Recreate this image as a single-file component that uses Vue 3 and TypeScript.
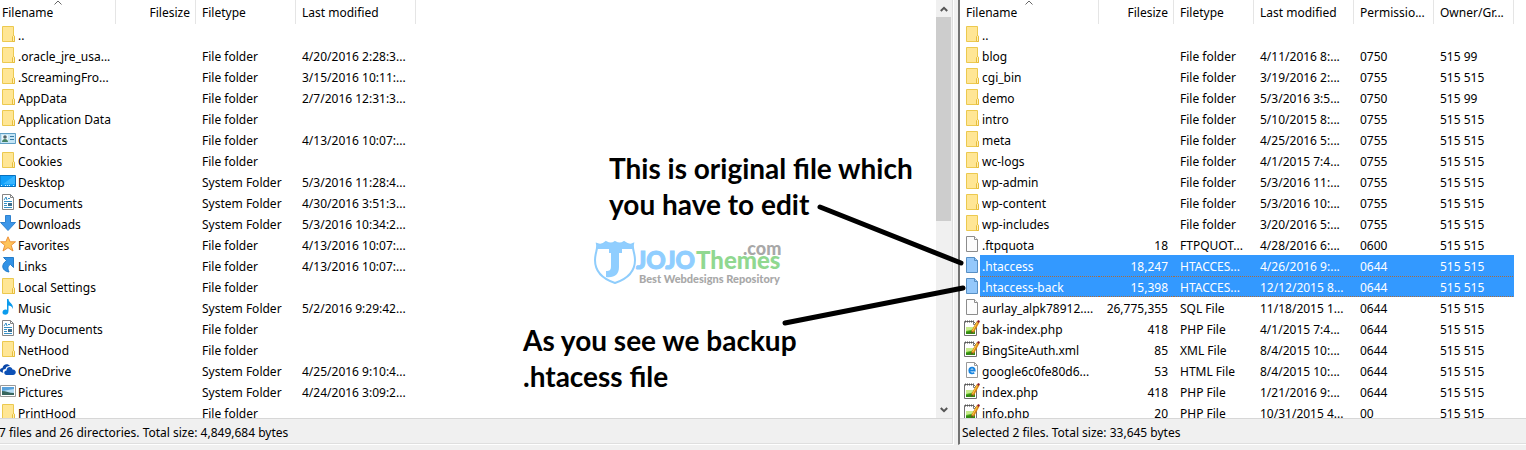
<script setup lang="ts">
interface Column { label: string; width: number; align?: 'right' }
interface Row { icon: string; cells: string[]; selected?: boolean; focused?: boolean }
interface Pane { id: string; title: string; columns: Column[]; rows: Row[]; status: string; scroll: boolean }

const local = (icon: string, name: string, type = '', modified = ''): Row => ({ icon, cells: [name, '', type, modified] })
const remote = (icon: string, ...cells: string[]): Row => ({ icon, cells })

const panes: Pane[] = [
  {
    id: 'local',
    title: 'Local files',
    scroll: true,
    status: '7 files and 26 directories. Total size: 4,849,684 bytes',
    columns: [
      { label: 'Filename', width: 116 },
      { label: 'Filesize', width: 80, align: 'right' },
      { label: 'Filetype', width: 100 },
      { label: 'Last modified', width: 120 },
    ],
    rows: [
      local('folder', '..'),
      local('folder', '.oracle_jre_usa...', 'File folder', '4/20/2016 2:28:3...'),
      local('folder', '.ScreamingFro...', 'File folder', '3/15/2016 10:11:...'),
      local('folder', 'AppData', 'File folder', '2/7/2016 12:31:3...'),
      local('folder', 'Application Data', 'File folder'),
      local('contacts', 'Contacts', 'File folder', '4/13/2016 10:07:...'),
      local('folder', 'Cookies', 'File folder'),
      local('desktop', 'Desktop', 'System Folder', '5/3/2016 11:28:4...'),
      local('document', 'Documents', 'System Folder', '4/30/2016 3:51:3...'),
      local('download', 'Downloads', 'System Folder', '5/3/2016 10:34:2...'),
      local('star', 'Favorites', 'File folder', '4/13/2016 10:07:...'),
      local('link', 'Links', 'File folder', '4/13/2016 10:07:...'),
      local('folder', 'Local Settings', 'File folder'),
      local('music', 'Music', 'System Folder', '5/2/2016 9:29:42...'),
      local('document', 'My Documents', 'File folder'),
      local('folder', 'NetHood', 'File folder'),
      local('cloud', 'OneDrive', 'System Folder', '4/25/2016 9:10:4...'),
      local('picture', 'Pictures', 'System Folder', '4/24/2016 3:09:2...'),
      local('folder', 'PrintHood', 'File folder'),
    ],
  },
  {
    id: 'remote',
    title: 'Remote files',
    scroll: false,
    status: 'Selected 2 files. Total size: 33,645 bytes',
    columns: [
      { label: 'Filename', width: 139 },
      { label: 'Filesize', width: 75, align: 'right' },
      { label: 'Filetype', width: 80 },
      { label: 'Last modified', width: 100 },
      { label: 'Permissio...', width: 80 },
      { label: 'Owner/Gr...', width: 80 },
    ],
    rows: [
      remote('folder', '..', '', '', '', '', ''),
      remote('folder', 'blog', '', 'File folder', '4/11/2016 8:...', '0750', '515 99'),
      remote('folder', 'cgi_bin', '', 'File folder', '3/19/2016 2:...', '0755', '515 515'),
      remote('folder', 'demo', '', 'File folder', '5/3/2016 3:5...', '0750', '515 99'),
      remote('folder', 'intro', '', 'File folder', '5/10/2015 8:...', '0755', '515 515'),
      remote('folder', 'meta', '', 'File folder', '4/25/2016 5:...', '0755', '515 515'),
      remote('folder', 'wc-logs', '', 'File folder', '4/1/2015 7:4...', '0755', '515 515'),
      remote('folder', 'wp-admin', '', 'File folder', '5/3/2016 11:...', '0755', '515 515'),
      remote('folder', 'wp-content', '', 'File folder', '5/3/2016 10:...', '0755', '515 515'),
      remote('folder', 'wp-includes', '', 'File folder', '3/20/2016 5:...', '0755', '515 515'),
      remote('file', '.ftpquota', '18', 'FTPQUOT...', '4/28/2016 6:...', '0600', '515 515'),
      { ...remote('file', '.htaccess', '18,247', 'HTACCES...', '4/26/2016 9:...', '0644', '515 515'), selected: true },
      { ...remote('file', '.htaccess-back', '15,398', 'HTACCES...', '12/12/2015 8...', '0644', '515 515'), selected: true, focused: true },
      remote('file', 'aurlay_alpk78912....', '26,775,355', 'SQL File', '11/18/2015 1...', '0644', '515 515'),
      remote('notepad', 'bak-index.php', '418', 'PHP File', '4/1/2015 7:4...', '0644', '515 515'),
      remote('notepad', 'BingSiteAuth.xml', '85', 'XML File', '8/4/2015 10:...', '0644', '515 515'),
      remote('edge', 'google6c0fe80d6...', '53', 'HTML File', '8/4/2015 10:...', '0644', '515 515'),
      remote('notepad', 'index.php', '418', 'PHP File', '1/21/2016 9:...', '0644', '515 515'),
      remote('notepad', 'info.php', '20', 'PHP File', '10/31/2015 4...', '00', '515 515'),
    ],
  },
]
</script>

<template>
  <main class="manager">
    <section v-for="pane in panes" :key="pane.id" class="pane" :class="pane.id" :aria-label="pane.title">
      <div class="body">
        <div class="list">
          <table>
            <colgroup>
              <col v-for="c in pane.columns" :key="c.label" :style="{ width: c.width + 'px' }" />
            </colgroup>
            <thead>
              <tr>
                <th v-for="(c, i) in pane.columns" :key="c.label" :class="[c.align, { lead: i === 0 }]">
                  <button type="button">{{ c.label }}</button>
                  <svg v-if="i === 0" class="sort" viewBox="0 0 8 5" aria-hidden="true"><path d="M.5 4.500 4 1l3.500 3.500" fill="none" stroke="#666" /></svg>
                </th>
              </tr>
            </thead>
            <tbody>
              <tr v-for="row in pane.rows" :key="row.cells[0]" :class="{ selected: row.selected, focused: row.focused }">
                <td v-for="(cell, i) in row.cells" :key="i" :class="[pane.columns[i].align, { lead: i === 0 }]">
                  <span v-if="i === 0" class="name">
                    <svg class="icon" viewBox="0 0 16 16" aria-hidden="true">
                      <g v-if="row.icon === 'folder'">
                        <path d="M2.500.5h11v9.500h1v5.500h-12z" fill="#ffe695" stroke="#ecc94f" />
                        <path d="M12.500 15.500v-5l1-1 1 1v5z" fill="#fff0b5" stroke="#e7bd3c" />
                      </g>
                      <g v-else-if="row.icon === 'file'" class="sheet">
                        <path d="M2.500.5h8l3 3v12h-11z" />
                        <path d="M10.500.5v3h3" />
                      </g>
                      <g v-else-if="row.icon === 'contacts'">
                        <path d="M0 2.500h15.500v10H0z" fill="#c4e5f6" stroke="#5f9fc5" />
                        <path d="M2 4h6v7H2z" fill="#edf7fb" />
                        <circle cx="5" cy="6" r="1.800" fill="#54656a" />
                        <path d="M2 11c0-4 6-4 6 0z" fill="#448264" />
                        <path d="M10 5.500h4M10 8.500h4" stroke="#397da8" />
                      </g>
                      <g v-else-if="row.icon === 'desktop'">
                        <path d="M0 2.500h15.500v11H0z" fill="#11a0fa" stroke="#0870bd" />
                        <path d="M3 11 14 3h1v8z" fill="#37b5ff" />
                        <path d="M1 12.500h2m2 0h6m2 0h2" stroke="#d6f2ff" stroke-dasharray="1 1" />
                      </g>
                      <g v-else-if="row.icon === 'document'">
                        <path d="M2.500.5h8l3 3v12h-11z" fill="#fff" stroke="#858585" />
                        <path d="M10.500.5v3h3" fill="none" stroke="#858585" />
                        <path d="m4 6 2-3 1 3M8 4.500h2M4 7.500h8M4 9.500h3M4 11.500h3M4 13.500h8" fill="none" stroke="#3690c5" />
                        <path d="M8 9h4v3H8z" fill="#3f6f8e" />
                      </g>
                      <path v-else-if="row.icon === 'download'" d="M5.500.5h5v7h5L8 15.500.5 7.500h5z" fill="#3c96e8" stroke="#2e82cf" />
                      <path v-else-if="row.icon === 'star'" d="m8 .8 2.200 5h5.300l-4.300 3.500 1.800 5.700L8 11.700 3 15l1.800-5.700L.5 5.800h5.300z" fill="#ffc45b" stroke="#ec923a" />
                      <path v-else-if="row.icon === 'link'" d="M3.500.5h10v10l-3-3c-3 1.500-3 4-1.500 7.500C2 14 .5 8 6.500 3.500z" fill="#3292e6" stroke="#257dca" />
                      <path v-else-if="row.icon === 'music'" d="M7 0h1.500c0 4 5 4 4.500 10-1-3-3-3.500-4.500-3.500V12c0 5-6 4.500-6 1.500C2.500 11 5 10 7 11z" fill="#0b9bed" />
                      <g v-else-if="row.icon === 'cloud'">
                        <path d="M1 10c-2-1-1-4 1.500-4C3 2 8 1 10 4c-3 0-4 1-4.500 3C3 7 2 9 3.500 11z" fill="#0a47a9" />
                        <path d="M6.500 13C3.500 13 3.500 8.500 6.500 8.500 6.500 4 12 4 12.500 7.500c4-.5 4.500 5.500.5 5.500z" fill="#0d51b6" />
                      </g>
                      <g v-else-if="row.icon === 'picture'">
                        <path d="M.5 2.500h15v11H.5z" fill="#fff" stroke="#999" />
                        <path d="M2 4h12v8H2z" fill="#b6dcf4" />
                        <path d="M2 4h12v2L2 8z" fill="#5aa2dc" />
                        <path d="M2 8c4 0 7 2 12 2v2H2z" fill="#38665f" />
                      </g>
                      <g v-else-if="row.icon === 'notepad'">
                        <path d="M.5 1.500h9l3 3v11H.5z" fill="#fff" stroke="#6f6f6f" />
                        <path d="M2 7h9v7H2z" fill="#5cba20" />
                        <path d="M2 7h9v2L2 11z" fill="#c7ec8a" />
                        <path d="M2 14V12l9-2v4z" fill="#348c13" />
                        <path d="M1 1.500h9" stroke="#555" stroke-width="2" stroke-dasharray="1 1" />
                        <path d="M9.500 1.500v3h3" fill="none" stroke="#777" />
                        <path d="m14 2-5.500 10" stroke="#d8861a" stroke-width="3" />
                        <path d="m13.500 2-5.500 10" stroke="#ffd246" />
                        <path d="m13 2 1-2 2 1-1 2z" fill="#8c1b22" />
                        <path d="m7 14 .5-3 2 1z" fill="#704c22" />
                      </g>
                      <g v-else-if="row.icon === 'edge'">
                        <path d="M2.500.5h8l3 3v12h-11z" fill="#fff" stroke="#999" />
                        <path d="M10.500.5v3h3" fill="none" stroke="#999" />
                        <path d="M5.500 8.500h5.200C10.500 4.500 5.500 5 5.300 8.500c-.2 3 3 3.500 5 2.300" fill="none" stroke="#1683df" stroke-width="1.800" />
                      </g>
                    </svg>
                    <span class="label">{{ cell }}</span>
                  </span>
                  <template v-else>{{ cell }}</template>
                </td>
              </tr>
            </tbody>
          </table>
        </div>
        <div v-if="pane.scroll" class="scrollbar">
          <button type="button" aria-label="Scroll up"><svg viewBox="0 0 8 6"><path d="m.8 5 3.200-3.200L7.200 5" fill="none" stroke="#555" stroke-width="2" /></svg></button>
          <div class="track"><div class="thumb"></div></div>
          <button type="button" aria-label="Scroll down"><svg viewBox="0 0 8 6"><path d="m.8 1 3.200 3.200L7.200 1" fill="none" stroke="#555" stroke-width="2" /></svg></button>
        </div>
      </div>
      <footer class="status">{{ pane.status }}</footer>
    </section>

    <p class="note original">This is original file which<br />you have to edit</p>
    <p class="note backup">As you see we backup<br />.htacess file</p>
    <svg class="logo" viewBox="0 0 192 48" role="img" aria-label="JOJOThemes.com">
      <path d="M4 4q5 2 9-2 5 3 9 0 5 3 9 0 5 4 9 2c-1 5 2 9 2 16 0 12-8 19-20 23C10 39 2 32 2 20 2 13 5 9 4 4z" fill="#fff" stroke="#8fcdfc" stroke-width="2" />
      <path d="M4 4q5 2 9-2 5 3 9 0 5 3 9 0 5 4 9 2v5H4z" fill="#90ceff" />
      <path d="M16 9h13v4h-3v14c0 8-5 11-13 10v-6c4 0 5-1 5-5V13h-2z" fill="#90ceff" />
      <text x="43" y="29" class="jojo">JOJO</text>
      <text x="103" y="29" class="themes">Themes</text>
      <text x="150" y="15" class="com">.com</text>
      <text x="46" y="43" class="tag">Best Webdesigns Repository</text>
    </svg>
    <svg class="pointers" viewBox="0 0 192 128" aria-hidden="true">
      <path d="m40 11 141 56M5 127l178-35" fill="none" stroke="#000" stroke-width="5" stroke-linecap="round" />
    </svg>
  </main>
</template>

<style>
body { margin: 0; }
</style>

<style scoped>
.manager {
  position: relative;
  box-sizing: border-box;
  height: 100vh;
  padding-bottom: 5px;
  display: grid;
  grid-template-columns: minmax(0, 954fr) minmax(0, 568fr);
  grid-template-rows: minmax(0, 1fr);
  column-gap: 4px;
  overflow: hidden;
  background: #f0f0f0;
  color: #000;
  font: 12px/18px "Noto Sans", "Open Sans", sans-serif;
}
.pane {
  display: flex;
  flex-direction: column;
  min-width: 0;
  border-bottom: 1px solid #fff;
}
.local { --lead: 0px; border-right: 1px solid #fff; }
.remote { --lead: 4px; border-left: 2px solid #737373; }
.body { flex: 1; min-height: 0; display: flex; background: #fff; }
.local .body, .local .status { border-right: 1px solid #dedede; }
.list { flex: 1; min-width: 0; overflow: hidden; }
table { width: 0; table-layout: fixed; border-collapse: separate; border-spacing: 0; }
th {
  position: relative;
  height: 24px;
  padding: 0 5px 0 6px;
  box-sizing: border-box;
  border-right: 1px solid #e5e5e5;
  font-weight: 400;
  text-align: left;
}
th.right { padding-right: 5px; }
th.lead { padding-left: calc(var(--lead) + 2px); }
th button {
  display: block;
  width: 100%;
  padding: 1px 0 0;
  border: 0;
  background: none;
  color: inherit;
  font: inherit;
  text-align: inherit;
  white-space: nowrap;
}
.sort { position: absolute; top: 0; left: calc(50% - 4px); width: 8px; height: 5px; }
td {
  box-sizing: border-box;
  height: 21px;
  padding: 3px 0 0 6px;
  white-space: nowrap;
}
td.right { padding: 3px 6px 0 0; }
.right { text-align: right; }
td.lead { padding: 0 0 0 var(--lead); }
.name { display: flex; height: 21px; }
.icon { flex: none; width: 16px; height: 16px; margin-top: 2px; }
.label { flex: 1; padding: 3px 0 0 2px; }
.sheet path { fill: #fcfcfc; stroke: #8c8c8c; }
.selected td:not(.lead), .selected .label { background: #3399ff; color: #fff; }
.selected .sheet path { fill: #94c8fb; stroke: #578fc4; }
.focused td:not(.lead), .focused .label {
  background-image: linear-gradient(90deg, #a96c3e 50%, transparent 50%), linear-gradient(90deg, #a96c3e 50%, transparent 50%);
  background-size: 2px 1px;
  background-position: 0 0, 0 100%;
  background-repeat: repeat-x;
}
.scrollbar { width: 16px; display: flex; flex-direction: column; background: #f0f0f0; }
.scrollbar button {
  height: 17px;
  padding: 0;
  border: 0;
  background: none;
  display: flex;
  align-items: center;
  justify-content: center;
}
.scrollbar button svg { width: 8px; height: 6px; }
.track { flex: 1; }
.thumb { width: 15px; height: 53%; background: #cdcdcd; }
.status {
  height: 24px;
  border-top: 1px solid #d7d7d7;
  border-bottom: 1px solid #dfdfdf;
  padding-left: 2px;
  line-height: 28px;
  white-space: nowrap;
  overflow: hidden;
}
.local .status { padding-left: 0; text-indent: -1px; }
.note {
  position: absolute;
  margin: 0;
  font: 700 28px/36px Lato, "Open Sans", sans-serif;
  white-space: nowrap;
}
.original { left: 609px; top: 150px; }
.backup { left: 523px; top: 322px; }
.logo { position: absolute; left: 593px; top: 240px; width: 192px; height: 48px; }
.jojo { font: 900 24px Lato, sans-serif; fill: #90ceff; stroke: #90ceff; }
.themes { font: 900 24px Lato, sans-serif; fill: #90d890; }
.com { font: 900 18px Lato, sans-serif; fill: #a8a8a8; }
.tag { font: 900 11px Lato, sans-serif; fill: #a8a8a8; }
.pointers { position: absolute; left: 780px; top: 196px; width: 192px; height: 128px; pointer-events: none; overflow: visible; }
</style>
